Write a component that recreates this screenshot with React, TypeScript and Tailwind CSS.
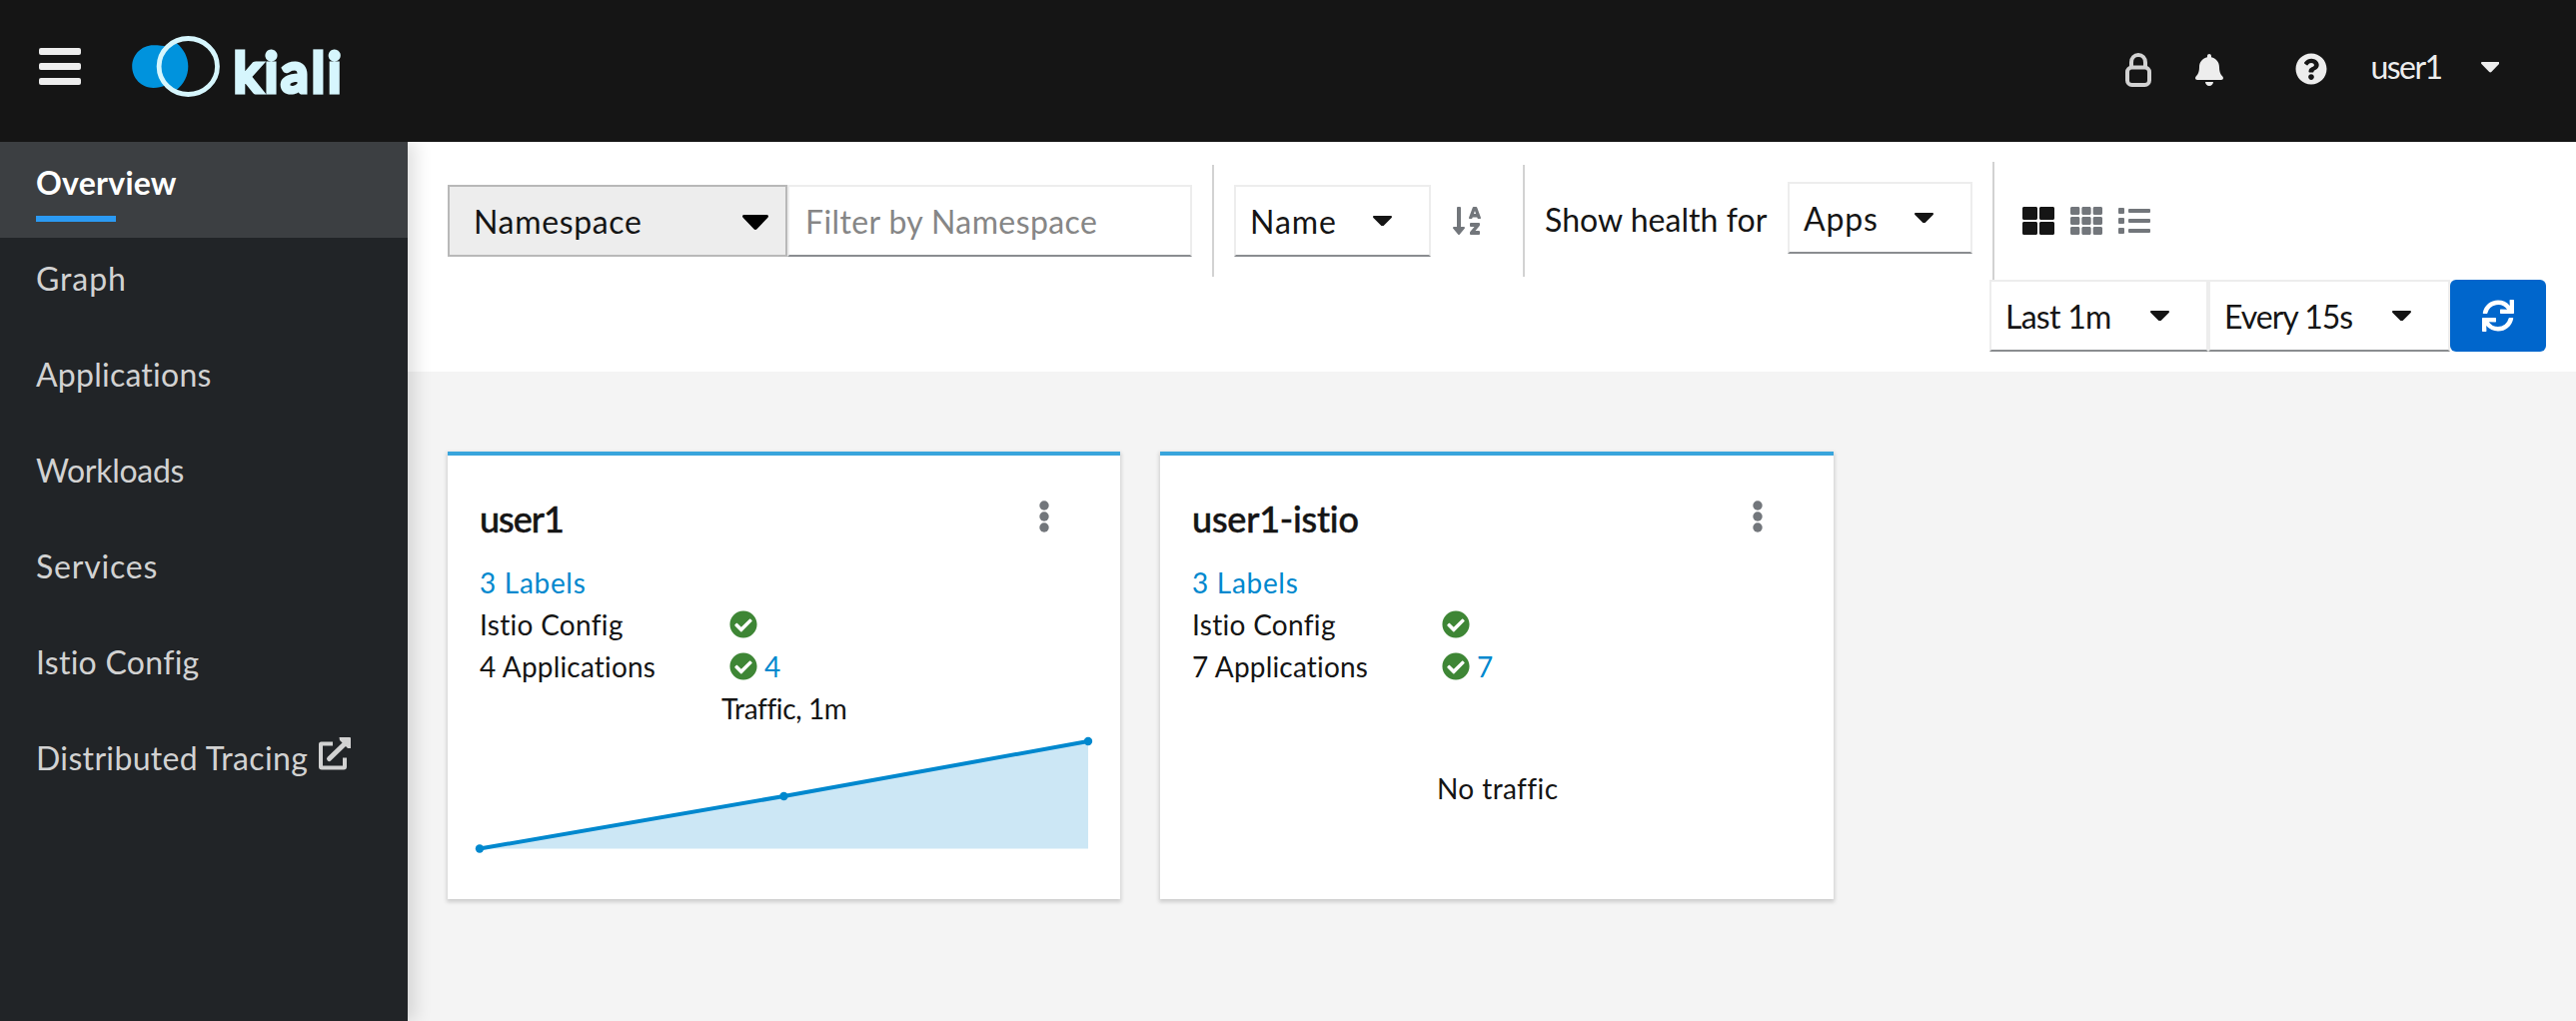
import type { ReactNode } from "react";
import {
  FaBell,
  FaCheckCircle,
  FaList,
  FaQuestionCircle,
  FaSortAlphaDown,
  FaSync,
  FaTh,
  FaThLarge,
} from "react-icons/fa";

function Caret({ className }: { className: string }) {
  return (
    <svg viewBox="0 0 19 10.5" className={className} fill="currentColor" preserveAspectRatio="none">
      <path d="M1.2 0H17.8C18.9 0 19.4 1.1 18.6 1.9L10.6 10C10 10.6 9 10.6 8.4 10L.4 1.9C-.4 1.1.1 0 1.2 0Z" />
    </svg>
  );
}

function KialiLogo() {
  return (
    <div className="ml-[51px] flex h-[142px] items-start">
      <svg viewBox="0 0 90 62" className="mt-[36px] h-[62px] w-[90px]">
        <path
          d="M21.5 9.3C27 9.3 32 10 34.5 10.6L44.5 7C52 13 56.3 21.5 56.3 30.4C56.3 39.5 52 48 44.5 54.2L33.5 49.6C30 51.3 26 52 21.5 52C9.600 52 .2 42.400 .2 30.600C.2 18.900 9.600 9.300 21.500 9.300Z"
          fill="#0093dd"
        />
        <ellipse cx="56.300" cy="30.500" rx="29.200" ry="28" fill="none" stroke="#d6f6fd" strokeWidth="4.800" />
      </svg>
      <span className="mt-[39.500px] ml-[12px] text-[54px] leading-[64px] tracking-[3.600px] text-[#d6f6fd] [-webkit-text-stroke:5.200px_#d6f6fd] [stroke-linejoin:round]">
        kiali
      </span>
    </div>
  );
}

function Masthead() {
  return (
    <header className="relative z-20 flex h-[142px] shrink-0 items-start bg-[#151515] pl-[39px] text-[#ededed]">
      <div className="mt-[47.500px] flex w-[42px] flex-col gap-[8px]">
        <span className="h-[7px] rounded-[2px] bg-[#ededed]" />
        <span className="h-[7px] rounded-[2px] bg-[#ededed]" />
        <span className="h-[7px] rounded-[2px] bg-[#ededed]" />
      </div>
      <KialiLogo />
      <div className="mr-[77px] ml-auto flex items-start">
        <svg viewBox="0 0 26 34" className="mt-[53px] h-[34px] w-[26px]" fill="none" stroke="#d2d2d2" strokeWidth="4">
          <rect x="2" y="14.500" width="22" height="17.500" rx="4.500" />
          <path d="M6 14.500V9.500C6 5 9 2 13 2S20 5 20 9.500V14.500" />
        </svg>
        <FaBell className="mt-[54px] ml-[44px] h-[32px] w-[28px]" />
        <FaQuestionCircle className="mt-[53px] ml-[72px] size-[32px]" />
        <span className="mt-[43px] ml-[44px] w-[72px] text-[32px] leading-[48px] tracking-[-1.560px] whitespace-nowrap">user1</span>
        <Caret className="mt-[62px] ml-[38px] h-[10.500px] w-[18.500px]" />
      </div>
    </header>
  );
}

const NAV = [
  { label: "Overview", track: "tracking-[0.250px]", active: true },
  { label: "Graph", track: "tracking-[0.910px]" },
  { label: "Applications", track: "tracking-[0.240px]" },
  { label: "Workloads", track: "tracking-[-0.300px]" },
  { label: "Services", track: "tracking-[0.800px]" },
  { label: "Istio Config", track: "tracking-[0.280px]" },
  { label: "Distributed Tracing", track: "tracking-[0.340px]", external: true },
];

function Sidebar() {
  return (
    <nav className="z-10 w-[408px] shrink-0 bg-[#212427] shadow-[8px_0_16px_0_rgba(3,3,3,0.12)]">
      {NAV.map((item) => (
        <div
          key={item.label}
          className={`flex h-[96px] flex-col pl-[36px] ${item.active ? "bg-[#3c3f42] font-bold text-white" : "text-[#d2d2d2]"}`}
        >
          <div className="mt-[17px] flex items-start text-[32px] leading-[48px]">
            <span className={item.track}>{item.label}</span>
            {item.external && (
              <svg viewBox="0 0 32 33" className="mt-[2.500px] ml-[11px] h-[33px] w-[32px]" fill="none" stroke="#d2d2d2">
                <path d="M14 6.500H2.500Q2 6.500 2 7V29.500Q2 30.500 3 30.500H25Q26 30.500 26 29.500V20.500" strokeWidth="4" />
                <path d="M10.500 21.500L25 7.500" strokeWidth="5" strokeLinecap="round" />
                <path d="M20.500 0H31Q32 0 32 1V11L29 11L21 3Z" fill="#d2d2d2" stroke="none" />
              </svg>
            )}
          </div>
          {item.active && <span className="mt-[9px] h-[6px] w-[80px] bg-[#2b9af3]" />}
        </div>
      ))}
    </nav>
  );
}

function Select({ className, track, caret, children }: { className: string; track: string; caret: string; children: ReactNode }) {
  return (
    <div
      className={`flex h-[72px] shrink-0 items-center justify-between border-2 border-[#ededed] border-b-[#8a8d90] pl-[14px] text-[32px] leading-[48px] whitespace-nowrap ${className}`}
    >
      <span className={`pt-[2px] ${track}`}>{children}</span>
      <Caret className={`h-[10.500px] w-[19px] ${caret}`} />
    </div>
  );
}

function Toolbar() {
  return (
    <section className="flex h-[230px] shrink-0 flex-col bg-white pl-[40px]">
      <div className="flex h-[138px] items-start">
        <div className="mt-[43px] flex h-[72px] w-[340px] items-center justify-between border-2 border-[#b8b8b8] bg-[#ededed] pr-[17px] pl-[24px] text-[32px] leading-[48px]">
          <span className="pt-[2px] tracking-[0.650px]">Namespace</span>
          <Caret className="mt-[3px] h-[15px] w-[26px] text-black" />
        </div>
        <div className="mt-[43px] flex h-[72px] w-[405px] items-center border-2 border-[#ededed] border-b-[#8a8d90] pl-[15px] text-[32px] leading-[48px] text-[#868686]">
          <span className="pt-[2px] pl-px tracking-[0.390px]">Filter by Namespace</span>
        </div>
        <span className="mt-[23px] ml-[20px] h-[112px] w-[2px] bg-[#d2d2d2]" />
        <Select className="mt-[43px] ml-[20px] w-[197px]" track="tracking-[0.940px]" caret="mr-[37px]">
          Name
        </Select>
        <FaSortAlphaDown className="mt-[63px] ml-[20px] size-[32px] text-[#72767b]" />
        <span className="mt-[23px] ml-[40px] h-[112px] w-[2px] bg-[#d2d2d2]" />
        <span className="mt-[54px] ml-[20px] w-[243px] text-[32px] leading-[48px] tracking-[0.040px] whitespace-nowrap">
          Show health for
        </span>
        <Select className="mt-[40px] w-[185px]" track="tracking-[0.840px]" caret="mr-[37px]">
          Apps
        </Select>
        <span className="mt-[20px] ml-[20px] h-[118px] w-[2px] bg-[#d2d2d2]" />
        <div className="mt-[63px] ml-[28px] flex gap-[16px] text-[32px] text-[#72767b]">
          <FaThLarge className="size-[32px] text-[#151515]" />
          <FaTh className="size-[32px]" />
          <FaList className="size-[32px]" />
        </div>
      </div>
      <div className="mr-[30px] flex justify-end">
        <Select className="w-[219px]" track="tracking-[-0.740px]" caret="mr-[37px]">
          Last 1m
        </Select>
        <Select className="w-[242px]" track="tracking-[-1.020px]" caret="mr-[37px]">
          Every 15s
        </Select>
        <button className="flex h-[72px] w-[96px] items-center justify-center rounded-[6px] bg-[#0066cc] text-white">
          <FaSync className="size-[32px]" />
        </button>
      </div>
    </section>
  );
}

function TrafficChart() {
  return (
    <svg viewBox="0 0 625 120" className="mt-[5px] -ml-[7px] h-[120px] w-[625px] shrink-0">
      <path d="M8 114.500L312.500 62L617 7V114.500Z" fill="#cce7f5" />
      <path d="M8 114.500L312.500 62L617 7" fill="none" stroke="#0088ce" strokeWidth="4" />
      <g fill="#0088ce">
        <circle cx="8" cy="114.500" r="4.200" />
        <circle cx="312.500" cy="62" r="4.200" />
        <circle cx="617" cy="7" r="4.200" />
      </g>
    </svg>
  );
}

interface NamespaceCardProps {
  name: string;
  nameTrack: string;
  apps: number;
  className: string;
  children: ReactNode;
}

function NamespaceCard({ name, nameTrack, apps, className, children }: NamespaceCardProps) {
  return (
    <article
      className={`flex h-[448px] flex-col border-t-4 border-[#39a5dc] bg-white pr-[30px] pl-[31px] text-[28px] leading-[42px] shadow-[0_2px_4px_1px_rgba(3,3,3,0.16)] ${className}`}
    >
      <div className="flex items-start justify-between">
        <h2
          className={`mt-[36px] pl-px text-[36px] leading-[54px] font-medium [-webkit-text-stroke:0.500px_#151515] ${nameTrack}`}
        >
          {name}
        </h2>
        <svg viewBox="0 0 10 32" className="mt-[44.500px] mr-[41.500px] h-[32px] w-[10px]" fill="#72767b">
          <circle cx="5" cy="5" r="4.700" />
          <circle cx="5" cy="16" r="4.700" />
          <circle cx="5" cy="27" r="4.700" />
        </svg>
      </div>
      <div className="mt-[16px] pl-px tracking-[0.700px] text-[#0088ce]">3 Labels</div>
      <div className="flex">
        <span className="w-[251px] pl-px tracking-[0.300px]">Istio Config</span>
        <FaCheckCircle className="mt-[7px] size-[28px] text-[#3e8635]" />
      </div>
      <div className="flex">
        <span className="w-[251px] pl-px tracking-[0.180px]">{apps} Applications</span>
        <FaCheckCircle className="mt-[7px] size-[28px] text-[#3e8635]" />
        <span className="ml-[7px] text-[#0088ce]">{apps}</span>
      </div>
      {children}
    </article>
  );
}

export default function App() {
  return (
    <div className="flex h-[1022px] w-[2578px] flex-col overflow-hidden bg-[#f4f4f4] font-['Lato',sans-serif] text-[#151515]">
      <Masthead />
      <div className="flex min-h-0 flex-1">
        <Sidebar />
        <main className="flex min-w-0 flex-1 flex-col">
          <Toolbar />
          <section className="flex gap-[40px] pt-[80px] pl-[40px]">
            <NamespaceCard name="user1" nameTrack="tracking-[-1.010px]" apps={4} className="w-[673px]">
              <div className="pl-[243px] tracking-[-0.380px]">Traffic, 1m</div>
              <TrafficChart />
            </NamespaceCard>
            <NamespaceCard name="user1-istio" nameTrack="tracking-[-0.210px]" apps={7} className="w-[674px]">
              <div className="mt-[80px] pl-[246px] tracking-[0.400px]">No traffic</div>
            </NamespaceCard>
          </section>
        </main>
      </div>
    </div>
  );
}
